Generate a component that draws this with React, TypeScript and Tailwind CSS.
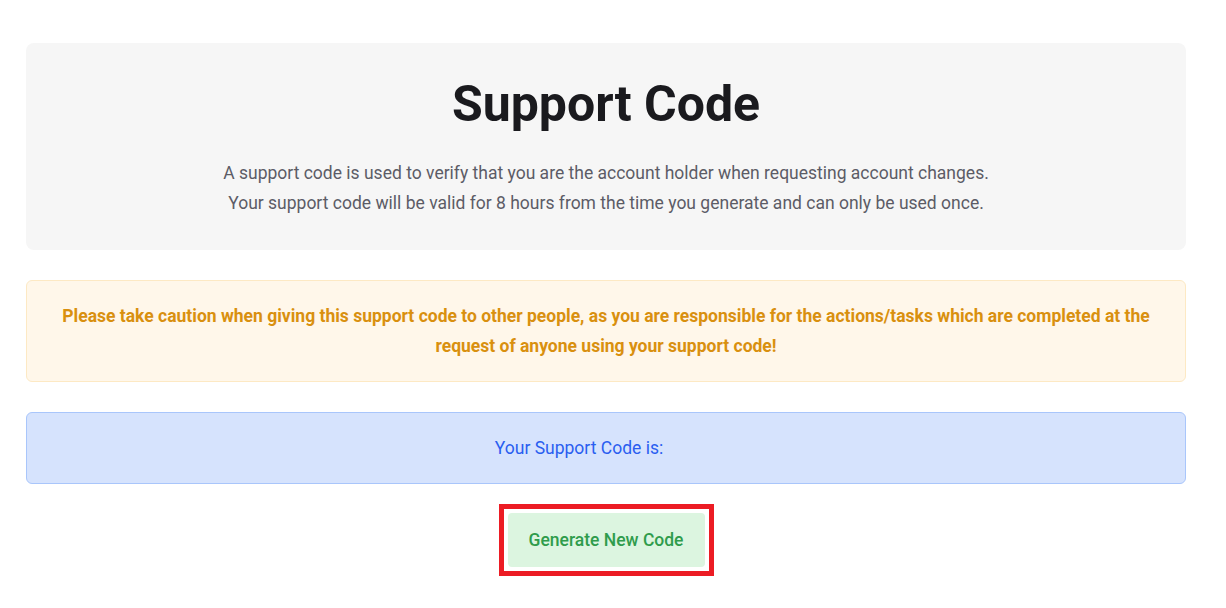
import React from 'react';

const App: React.FC = () => {
  return (
    <div className="min-h-screen bg-white font-['Roboto',sans-serif]">
      <div className="pl-[26px] pr-[40px] pt-[43px] flex flex-col gap-[30px]">
        {/* Intro card */}
        <div className="bg-[#f6f6f6] rounded-lg pt-8 pb-8 text-center">
          <h1 className="text-[50px] leading-[58px] font-bold text-[#1a1a1e] mb-[25px]">Support Code</h1>
          <p className="text-[17.5px] leading-[30px] text-[#5c5c66]">
            A support code is used to verify that you are the account holder when requesting account changes.
            <br />
            Your support code will be valid for 8 hours from the time you generate and can only be used once.
          </p>
        </div>

        {/* Warning */}
        <div className="bg-[#fff7ea] border border-[#fde9c4] rounded-md py-5 px-8 text-center">
          <p className="text-[17.5px] leading-[30px] font-bold text-[#d9900f]">
            Please take caution when giving this support code to other people, as you are responsible for the actions/tasks which are completed at the request of anyone using your support code!
          </p>
        </div>

        {/* Code display */}
        <div className="bg-[#d6e3fd] border border-[#a9c6fb] rounded-md py-5 text-center">
          <p className="text-[17.5px] leading-[30px] text-[#2a5ef0]">
            Your Support Code is:
            <span className="inline-block w-[54px] font-bold tracking-widest"></span>
          </p>
        </div>
      </div>

      {/* Action */}
      <div className="pl-[26px] pr-[40px] flex justify-center mt-[20px]">
        <div className="border-[5px] border-[#ec1c24] p-1">
          <button className="bg-[#dcf5e0] text-[#2f9c4c] rounded text-[17.5px] leading-[30px] font-medium px-[21px] py-3 whitespace-nowrap">
            Generate New Code
          </button>
        </div>
      </div>
    </div>
  );
};

export default App;
